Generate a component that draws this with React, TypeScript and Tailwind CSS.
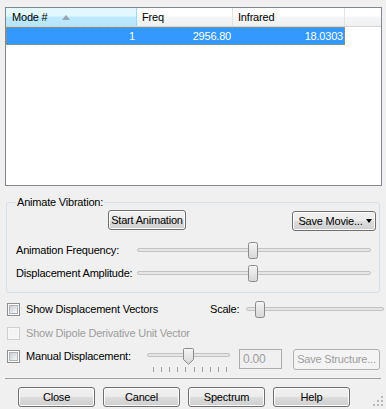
import React from 'react';

const btn =
  'h-[20px] flex items-center justify-center rounded-[3px] border border-[#707070] bg-[linear-gradient(#f2f2f2_0%,#ebebeb_50%,#dddddd_51%,#cfcfcf_100%)] shadow-[inset_0_0_0_1px_#fcfcfc] text-black';

function Thumb() {
  return (
    <svg width="10" height="17" viewBox="0 0 10 17">
      <defs>
        <linearGradient id="tg" x1="0" y1="0" x2="0" y2="1">
          <stop offset="0" stopColor="#f5f5f5" />
          <stop offset="1" stopColor="#d6d6d6" />
        </linearGradient>
      </defs>
      <rect x="0.5" y="0.5" width="9" height="16" rx="2" fill="url(#tg)" stroke="#8a8a8a" />
    </svg>
  );
}

function DownThumb() {
  return (
    <svg width="11" height="17" viewBox="0 0 11 17">
      <defs>
        <linearGradient id="dg" x1="0" y1="0" x2="0" y2="1">
          <stop offset="0" stopColor="#f5f5f5" />
          <stop offset="1" stopColor="#d6d6d6" />
        </linearGradient>
      </defs>
      <path d="M1.5 0.5 H9.5 Q10.5 0.5 10.5 1.5 V11.5 L5.5 16.3 L0.5 11.5 V1.5 Q0.5 0.5 1.5 0.5 Z" fill="url(#dg)" stroke="#8a8a8a" />
    </svg>
  );
}

function Slider({ width, thumb }: { width: number; thumb: number }) {
  return (
    <div className="relative h-[17px]" style={{ width }}>
      <div className="absolute left-0 right-0 top-[6px] h-[4px] rounded-[2px] border border-[#c2c2c2] bg-[#e6e6e6]" />
      <div className="absolute top-0" style={{ left: thumb }}>
        <Thumb />
      </div>
    </div>
  );
}

function Check({ disabled }: { disabled?: boolean }) {
  return (
    <div
      className={
        'w-[13px] h-[13px] shrink-0 border p-[1px] ' +
        (disabled ? 'border-[#cfcfcf] bg-[#fafafa]' : 'border-[#8e8f8f] bg-white')
      }
    >
      <div
        className={
          'w-full h-full ' +
          (disabled
            ? 'bg-[#f4f4f4]'
            : 'bg-[linear-gradient(135deg,#cbcfd5_0%,#f6f6f6_100%)] border border-[#aeb3b9]')
        }
      />
    </div>
  );
}

export default function App() {
  const ticks = Array.from({ length: 10 }, (_, i) => 6 + Math.round(i * 8.1));
  return (
    <div className="relative w-[386px] h-[409px] overflow-hidden bg-[#f0f0f0] pt-[7px] text-[11px] leading-[13px] tracking-[-0.2px] text-black font-['Liberation_Sans',Arial,sans-serif]">
      {/* list view */}
      <div className="ml-[5px] w-[377px] h-[179px] border border-[#828790] bg-white">
        <div className="flex h-[19px] border-b border-[#d5d5d5]">
          <div className="relative w-[131px] flex items-center pl-[6px] border-r border-[#96d9f9] bg-[linear-gradient(#e3f7ff_0%,#e3f7ff_45%,#bde9fd_50%,#b7e5fb_100%)]">
            Mode #
            <div className="absolute left-[56px] top-[7px] w-0 h-0 border-l-[4.5px] border-r-[4.5px] border-b-[5px] border-l-transparent border-r-transparent border-b-[#97a3ad]" />
          </div>
          <div className="w-[96px] flex items-center pl-[5px] border-r border-[#e3e3e3] bg-[linear-gradient(#ffffff_0%,#ffffff_45%,#f4f5f6_50%,#f0f1f2_100%)]">
            Freq
          </div>
          <div className="w-[112px] flex items-center pl-[5px] border-r border-[#e3e3e3] bg-[linear-gradient(#ffffff_0%,#ffffff_45%,#f4f5f6_50%,#f0f1f2_100%)]">
            Infrared
          </div>
          <div className="flex-1 bg-[linear-gradient(#ffffff_0%,#ffffff_45%,#f4f5f6_50%,#f0f1f2_100%)]" />
        </div>
        <div className="flex h-[18px] w-[339px] items-center bg-[#3399ff] text-white border border-dotted border-[#b98a5c]">
          <div className="w-[130px] text-right pr-[2px]">1</div>
          <div className="w-[96px] text-right pr-[2px]">2956.80</div>
          <div className="w-[111px] text-right pr-[1px]">18.0303</div>
        </div>
      </div>

      {/* animate vibration group */}
      <fieldset className="mt-[10px] ml-[6px] w-[374px] h-[97px] border border-[#d5dfe5] rounded-[3px]">
        <legend className="ml-[9px] px-[1px] leading-[13px]">Animate Vibration:</legend>
        <div className="flex h-[20px] mt-[1px]">
          <div className={btn + ' ml-[101px] w-[78px]'}>Start Animation</div>
          <div className={btn + ' ml-auto mr-[3px] mt-[1px] w-[84px] pl-[2px]'}>
            <span>Save Movie...</span>
            <span className="ml-[3px] w-0 h-0 border-l-[3.5px] border-r-[3.5px] border-t-[4px] border-l-transparent border-r-transparent border-t-black" />
          </div>
        </div>
        <div className="flex items-center h-[17px] mt-[12px]">
          <div className="ml-[9px] w-[121px]">Animation Frequency:</div>
          <Slider width={234} thumb={111} />
        </div>
        <div className="flex items-center h-[17px] mt-[6px]">
          <div className="ml-[9px] w-[121px]">Displacement Amplitude:</div>
          <Slider width={234} thumb={111} />
        </div>
      </fieldset>

      {/* show displacement vectors / scale */}
      <div className="flex items-center h-[17px] mt-[8px]">
        <div className="flex items-center w-[210px] pl-[7px]">
          <Check />
          <span className="ml-[6px]">Show Displacement Vectors</span>
        </div>
        <div className="w-[36px]">Scale:</div>
        <Slider width={138} thumb={9} />
      </div>

      {/* dipole */}
      <div className="flex items-center h-[14px] mt-[8px] pl-[7px]">
        <Check disabled />
        <span className="ml-[6px] text-[#9d9d9d]">Show Dipole Derivative Unit Vector</span>
      </div>

      {/* manual displacement */}
      <div className="flex items-start h-[26px] mt-[7px]">
        <div className="flex items-center w-[147px] pl-[7px] mt-[3px]">
          <Check />
          <span className="ml-[6px]">Manual Displacement:</span>
        </div>
        <div className="relative w-[83px] h-[26px]">
          <div className="absolute left-0 right-0 top-[6px] h-[4px] rounded-[2px] border border-[#c2c2c2] bg-[#e6e6e6]" />
          <div className="absolute left-[36px] top-[1px]">
            <DownThumb />
          </div>
          {ticks.map((x) => (
            <div key={x} className="absolute top-[20px] w-px h-[5px] bg-[#a0a0a0]" style={{ left: x }} />
          ))}
        </div>
        <div className="ml-[9px] mt-[2px] w-[43px] h-[20px] border border-[#adadad] bg-[#f0f0f0] pl-[3px] flex items-center text-[12px] text-[#9d9d9d]">
          0.00
        </div>
        <div className="ml-[11px] mt-[2px] w-[87px] h-[21px] rounded-[3px] border border-[#adb2b5] bg-[#f4f4f4] flex items-center justify-center text-[#9d9d9d]">
          Save Structure...
        </div>
      </div>

      <div className="ml-[5px] mt-[5px] w-[376px] h-px bg-[#a0a0a0]" />

      {/* bottom buttons */}
      <div className="flex gap-[8px] ml-[18px] mt-[8px]">
        <div className={btn + ' w-[77px]'}>Close</div>
        <div className={btn + ' w-[77px]'}>Cancel</div>
        <div className={btn + ' w-[77px]'}>Spectrum</div>
        <div className={btn + ' w-[77px]'}>Help</div>
      </div>

      {/* size grip */}
      <svg className="absolute right-[3px] bottom-[3px]" width="10" height="10" viewBox="0 0 10 10">
        {[
          [8, 0], [8, 4], [8, 8], [4, 4], [4, 8], [0, 8],
        ].map(([x, y]) => (
          <rect key={`${x}-${y}`} x={x} y={y} width="2" height="2" fill="#b8b8b8" />
        ))}
      </svg>
    </div>
  );
}
